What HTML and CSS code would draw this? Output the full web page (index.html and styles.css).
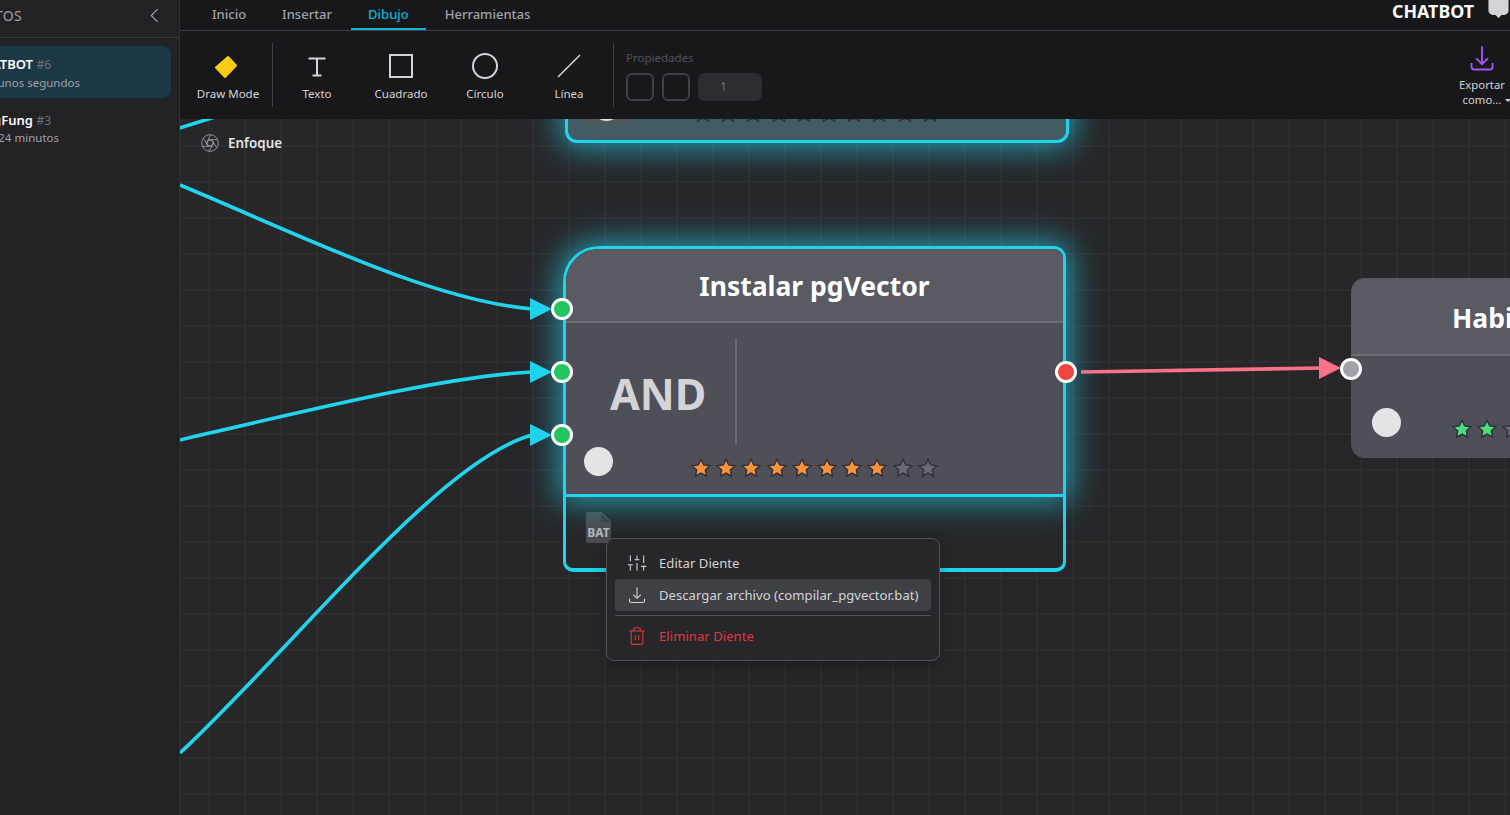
FILE: index.html

```html
<!DOCTYPE html>
<html lang="es">
<head>
  <meta charset="UTF-8" />
  <meta name="viewport" content="width=device-width, initial-scale=1.0"/>
  <title>Chatbot</title>
  <link rel="stylesheet" href="styles.css">
</head>
<body>

  <svg class="defs" width="0" height="0">
    <symbol id="star" viewBox="0 0 24 24">
      <path d="M12 2.500l2.900 6.200 6.800.8-5 4.600 1.300 6.700-6-3.300-6 3.300 1.300-6.700-5-4.600 6.800-.8z"/>
    </symbol>
  </svg>

  <aside class="sidebar">
    <div class="side-head">
      <span class="side-title">PROYECTOS</span>
      <svg class="chevron" viewBox="0 0 24 24"><path d="M15 3l-9 9 9 9"/></svg>
    </div>
    <div class="side-list">
      <div class="side-item active">
        <div class="item-name">CHATBOT <span class="item-num">#6</span></div>
        <div class="item-time">Hace unos segundos</div>
      </div>
      <div class="side-item second">
        <div class="item-name">KungFung <span class="item-num">#3</span></div>
        <div class="item-time">Hace 24 minutos</div>
      </div>
    </div>
  </aside>

  <main class="main">
    <nav class="tabs">
      <a class="tab">Inicio</a>
      <a class="tab">Insertar</a>
      <a class="tab current">Dibujo</a>
      <a class="tab">Herramientas</a>
      <div class="brand">
        <span>CHATBOT</span>
        <svg class="bubble" viewBox="0 0 23 24"><path d="M5 -4h13a5 5 0 0 1 5 5v11a5 5 0 0 1-5 5h-3l-3.500 3.500-3.500-3.500H5a5 5 0 0 1-5-5V1a5 5 0 0 1 5-5z"/></svg>
      </div>
    </nav>

    <section class="ribbon">
      <div class="tool tool-mode">
        <svg class="tool-icon" width="24" height="24" viewBox="0 0 24 24"><path class="mode-shape" d="M15 2l8 8.500-11 11.500-9-9.500z"/></svg>
        <span>Draw Mode</span>
      </div>
      <div class="sep"></div>
      <div class="tool">
        <svg class="tool-icon" width="24" height="24" viewBox="0 0 24 24"><path d="M3.500 3.500h17M12 3.500v17M7.500 20.500h9"/></svg>
        <span>Texto</span>
      </div>
      <div class="tool">
        <svg class="tool-icon" width="26" height="26" viewBox="0 0 26 26"><rect x="2" y="2" width="22" height="22"/></svg>
        <span>Cuadrado</span>
      </div>
      <div class="tool">
        <svg class="tool-icon" width="26" height="26" viewBox="0 0 26 26"><circle cx="13" cy="13" r="12"/></svg>
        <span>Círculo</span>
      </div>
      <div class="tool">
        <svg class="tool-icon thin" width="26" height="26" viewBox="0 0 26 26"><path d="M2 24L24 2"/></svg>
        <span>Línea</span>
      </div>
      <div class="sep sep-props"></div>
      <div class="props">
        <div class="props-label">Propiedades</div>
        <div class="props-row">
          <div class="swatch"></div>
          <div class="swatch"></div>
          <div class="stroke-input">1</div>
        </div>
      </div>
      <div class="export">
        <svg width="28" height="28" viewBox="0 0 24 24"><path d="M3 15.500v3.250A2.250 2.250 0 0 0 5.250 21h13.500A2.250 2.250 0 0 0 21 18.750V15.500M17 11.500L12 16.500l-5-5M12 16.500V1"/></svg>
        <span>Exportar<br>como...</span>
        <i class="caret"></i>
      </div>
    </section>

    <section class="canvas">
      <svg class="wires" viewBox="180 119 1330 696">
        <path class="wire cyan" d="M170 131L215 117"/>
        <path class="wire cyan" d="M180 185C300 235 430 300 532 309"/>
        <path class="wire cyan" d="M180 440C330 405 450 376 532 372"/>
        <path class="wire cyan" d="M180 753C300 640 440 460 532 435"/>
        <path class="head cyan" d="M530 298L552 309L530 320z"/>
        <path class="head cyan" d="M530 361L552 372L530 383z"/>
        <path class="head cyan" d="M530 424L552 435L530 446z"/>
        <path class="wire pink" d="M1081 372L1322 368"/>
        <path class="head pink" d="M1319 357L1341 368L1319 379z"/>
      </svg>

      <div class="focus">
        <svg viewBox="0 0 24 24"><circle cx="12" cy="12" r="10"/><circle cx="12" cy="12" r="3.500"/><path d="M14.310 8l5.740 9.940M9.690 8h11.480M7.380 12l5.740-9.940M9.690 16L3.950 6.060M14.310 16H2.830M16.620 12l-5.740 9.940"/></svg>
        <span>Enfoque</span>
      </div>

      <div class="node node-top">
        <div class="node-foot">
          <i class="dot"></i>
          <div class="stars">
            <svg class="star green"><use href="#star"/></svg>
            <svg class="star green"><use href="#star"/></svg>
            <svg class="star off"><use href="#star"/></svg>
            <svg class="star off"><use href="#star"/></svg>
            <svg class="star off"><use href="#star"/></svg>
            <svg class="star off"><use href="#star"/></svg>
            <svg class="star off"><use href="#star"/></svg>
            <svg class="star off"><use href="#star"/></svg>
            <svg class="star off"><use href="#star"/></svg>
            <svg class="star off"><use href="#star"/></svg>
          </div>
        </div>
      </div>

      <div class="node node-main">
        <div class="node-card">
          <h2 class="node-title">Instalar pgVector</h2>
          <div class="node-body">
            <div class="gate">AND</div>
            <div class="gate-line"></div>
            <div class="node-foot">
              <i class="dot"></i>
              <div class="stars">
                <svg class="star orange"><use href="#star"/></svg>
                <svg class="star orange"><use href="#star"/></svg>
                <svg class="star orange"><use href="#star"/></svg>
                <svg class="star orange"><use href="#star"/></svg>
                <svg class="star orange"><use href="#star"/></svg>
                <svg class="star orange"><use href="#star"/></svg>
                <svg class="star orange"><use href="#star"/></svg>
                <svg class="star orange"><use href="#star"/></svg>
                <svg class="star off"><use href="#star"/></svg>
                <svg class="star off"><use href="#star"/></svg>
              </div>
            </div>
          </div>
        </div>
        <div class="node-teeth">
          <div class="file-badge">BAT</div>
        </div>
      </div>

      <div class="node node-next">
        <h2 class="node-title">Habilitar pgVector</h2>
        <div class="node-body">
          <div class="node-foot">
            <i class="dot"></i>
            <div class="stars">
              <svg class="star mint"><use href="#star"/></svg>
              <svg class="star mint"><use href="#star"/></svg>
              <svg class="star off"><use href="#star"/></svg>
            </div>
          </div>
        </div>
      </div>

      <i class="port in p1"></i>
      <i class="port in p2"></i>
      <i class="port in p3"></i>
      <i class="port out"></i>
      <i class="port idle"></i>

      <div class="menu">
        <div class="menu-item">
          <svg viewBox="0 0 24 24"><path d="M4 21v-7M4 10V3M12 21v-9M12 8V3M20 21v-5M20 12V3M1 14h6M9 8h6M17 16h6"/></svg>
          <span>Editar Diente</span>
        </div>
        <div class="menu-item hover">
          <svg viewBox="0 0 24 24"><path d="M3 16.500v2.250A2.250 2.250 0 0 0 5.250 21h13.500A2.250 2.250 0 0 0 21 18.750V16.500M16.500 11.500L12 16l-4.500-4.500M12 16V3"/></svg>
          <span>Descargar archivo (compilar_pgvector.bat)</span>
        </div>
        <div class="menu-sep"></div>
        <div class="menu-item danger">
          <svg viewBox="0 0 24 24"><path d="M3 6h18M19 6v14c0 1-1 2-2 2H7c-1 0-2-1-2-2V6M8 6V4c0-1 1-2 2-2h4c1 0 2 1 2 2v2M10 11v6M14 11v6"/></svg>
          <span>Eliminar Diente</span>
        </div>
      </div>
    </section>
  </main>

</body>
</html>
```

FILE: styles.css

```css
* {
  box-sizing: border-box;
}
html, body {
  height: 100%;
}
body {
  margin: 0;
  display: flex;
  overflow: hidden;
  font-family: "Noto Sans", "Open Sans", sans-serif;
  color: #e4e4e7;
  background: #27272a;
}
.defs {
  position: absolute;
}

/* barra lateral */
.sidebar {
  width: 180px;
  flex: none;
  overflow: hidden;
  background: #222225;
  border-right: 1px solid #303033;
}
.side-head {
  height: 38px;
  display: flex;
  align-items: center;
  justify-content: flex-end;
  padding: 0 15px 6px 0;
  border-bottom: 1px solid #3a3a3d;
  position: relative;
}
.side-title {
  position: absolute;
  right: 157px;
  top: 6px;
  font-size: 14px;
  color: #a1a1aa;
  letter-spacing: 0.3px;
  white-space: nowrap;
}
.chevron {
  width: 17px;
  height: 17px;
  fill: none;
  stroke: #a1a1aa;
  stroke-width: 1.600;
}
.side-list {
  padding: 8px 8px 0 0;
}
.side-item {
  height: 52px;
  white-space: nowrap;
  width: 171px;
  position: relative;
}
.side-item.active {
  background: #1c3845;
  border-radius: 0 8px 8px 0;
}
.side-item.second {
  margin-top: 12px;
}
.item-name {
  position: absolute;
  right: 120px;
  top: 9px;
  font-size: 13px;
  font-weight: 600;
  color: #fafafa;
}
.item-num {
  font-weight: 400;
  font-size: 12px;
  color: #71717a;
}
.side-item.second .item-name {
  right: 120px;
  top: 1px;
}
.item-time {
  position: absolute;
  right: 91px;
  top: 29px;
  font-size: 11.500px;
  color: #a1a1aa;
}
.side-item.second .item-time {
  right: 112px;
  top: 20px;
}

/* pestañas */
.main {
  flex: 1;
  min-width: 0;
  display: flex;
  flex-direction: column;
}
.tabs {
  height: 31px;
  flex: none;
  display: flex;
  gap: 2px;
  padding-left: 15px;
  background: #18181b;
  border-bottom: 1px solid #3f3f46;
}
.tab {
  height: 30px;
  padding: 5px 17px 0;
  font-size: 13px;
  font-weight: 500;
  color: #a1a1aa;
}
.tab.current {
  color: #06b6d4;
  border-bottom: 2px solid #06b6d4;
}
.brand {
  margin-left: auto;
  display: flex;
  gap: 13px;
  font-size: 17.800px;
  font-weight: 700;
  color: #fafafa;
}
.brand span {
  line-height: 22px;
}
.bubble {
  width: 23px;
  height: 21px;
  fill: #d4d4d8;
}

/* cinta */
.ribbon {
  height: 88px;
  flex: none;
  display: flex;
  align-items: center;
  padding-left: 12px;
  background: #18181b;
  position: relative;
  z-index: 3;
}
.tool {
  width: 84px;
  height: 64px;
  display: flex;
  flex-direction: column;
  align-items: center;
  justify-content: flex-end;
  font-size: 11.500px;
  color: #d4d4d8;
}
.tool span {
  margin-top: 3px;
  line-height: 16px;
  padding-bottom: 5px;
}
.tool-icon {
  fill: none;
  stroke: #d4d4d8;
  stroke-width: 2;
  margin-bottom: 4px;
}
.tool-icon.thin {
  stroke-width: 1.600;
}
.tool-mode {
  width: 72px;
}
.tool-mode .tool-icon {
  margin-right: 6px;
}
.mode-shape {
  fill: #facc15;
  stroke: #facc15;
  stroke-linejoin: round;
}
.sep {
  width: 1px;
  height: 64px;
  background: #3f3f46;
}
.tool-mode + .sep {
  margin-left: 8px;
  margin-right: 2px;
}
.sep-props {
  margin-left: 2px;
}
.props {
  margin-left: 12px;
}
.props-label {
  font-size: 11.500px;
  color: #52525b;
  margin-bottom: 8px;
}
.props-row {
  display: flex;
  gap: 8px;
}
.swatch {
  width: 28px;
  height: 28px;
  border: 2px solid #3f3f46;
  border-radius: 6px;
}
.stroke-input {
  width: 64px;
  height: 28px;
  padding-left: 22px;
  line-height: 28px;
  font-size: 12px;
  color: #71717a;
  background: #2c2c31;
  border-radius: 6px;
}
.export {
  margin-left: auto;
  width: 56px;
  padding-top: 2px;
  display: flex;
  flex-direction: column;
  align-items: center;
  font-size: 11.300px;
  line-height: 15px;
  text-align: center;
  color: #d4d4d8;
  position: relative;
}
.export svg {
  fill: none;
  stroke: #a855f7;
  stroke-width: 1.600;
  margin-bottom: 4px;
}
.caret {
  position: absolute;
  right: -1px;
  bottom: 5px;
  border: 3px solid transparent;
  border-top-color: #d4d4d8;
  border-bottom: 0;
}

/* lienzo */
.canvas {
  flex: 1;
  position: relative;
  overflow: hidden;
  background-color: #27272a;
  background-image:
    linear-gradient(to right, #2d2d30 2px, transparent 2px),
    linear-gradient(to bottom, #2d2d30 2px, transparent 2px);
  background-size: 36px 36px;
  background-position: 28px 26px;
}
.wires {
  position: absolute;
  inset: 0;
  width: 1330px;
  height: 696px;
}
.wire {
  fill: none;
  stroke-width: 3.600;
}
.wire.cyan {
  stroke: #22d3ee;
}
.wire.pink {
  stroke: #fb7185;
}
.head.cyan {
  fill: #22d3ee;
}
.head.pink {
  fill: #fb7185;
}
.focus {
  position: absolute;
  left: 20px;
  top: 14px;
  display: flex;
  align-items: center;
  gap: 8px;
  font-size: 13.400px;
  font-weight: 600;
}
.focus svg {
  width: 20px;
  height: 20px;
  fill: none;
  stroke: #a1a1aa;
  stroke-width: 1;
}

/* nodos */
.node {
  position: absolute;
}
.node-title {
  margin: 0;
  height: 74px;
  line-height: 74px;
  padding-bottom: 2px;
  text-align: center;
  font-size: 26.500px;
  font-weight: 700;
  color: #fff;
  white-space: nowrap;
  background: #5a5a62;
  border-bottom: 2px solid #6e6e73;
}
.node-body {
  position: relative;
  background: #4f4f58;
}
.node-foot {
  display: flex;
  align-items: center;
}
.dot {
  width: 29px;
  height: 29px;
  flex: none;
  border-radius: 50%;
  background: #e4e4e7;
}
.stars {
  display: flex;
  gap: 3.200px;
  margin-top: 13px;
}
.star {
  width: 22px;
  height: 22px;
  stroke: #2f2f33;
  stroke-width: 1.500;
}
.star.orange {
  fill: #fb923c;
}
.star.green {
  fill: #22c55e;
}
.star.mint {
  fill: #4ade80;
}
.star.off {
  fill: #6b6b73;
}

.node-top {
  left: 385px;
  top: -179px;
  width: 504px;
  height: 203px;
  padding: 0 19px 0 24px;
  border: 3px solid #22d3ee;
  border-radius: 12px;
  background: #425c65;
  box-shadow: 0 0 32px 4px rgba(34, 211, 238, 0.7);
}
.node-top .node-foot {
  position: relative;
  margin-top: 146px;
  gap: 71px;
}
.node-top .node-foot::before {
  content: "";
  position: absolute;
  left: -9px;
  top: -10px;
  width: 47px;
  height: 46px;
  border-radius: 8px;
  background: #55555c;
}
.node-top .dot,
.node-top .stars {
  position: relative;
}

.node-main {
  left: 383px;
  top: 127px;
  width: 503px;
  display: flex;
  flex-direction: column;
}
.node-card {
  position: relative;
  z-index: 1;
  border: 3px solid #22d3ee;
  border-radius: 36px 12px 0 0;
  box-shadow: 0 0 32px 4px rgba(34, 211, 238, 0.7);
}
.node-card .node-title {
  border-radius: 33px 9px 0 0;
}
.node-card .node-body {
  height: 171px;
  padding: 15px 0 0 44px;
  display: flex;
}
.gate {
  width: 125px;
  height: 106px;
  line-height: 112px;
  font-size: 43px;
  font-weight: 700;
  color: #d4d4d8;
}
.gate-line {
  width: 2px;
  height: 106px;
  background: #6b6b72;
}
.node-card .node-foot {
  position: absolute;
  left: 18px;
  top: 121px;
  gap: 77px;
}
.node-teeth {
  height: 75px;
  padding: 15px 0 0 20px;
  border: 3px solid #22d3ee;
  border-top: 0;
  border-bottom-width: 4px;
  border-radius: 0 0 10px 10px;
  background: #27272a;
}
.file-badge {
  position: relative;
  width: 25px;
  height: 31px;
  padding-top: 13px;
  text-align: center;
  font-size: 12px;
  line-height: 16px;
  font-weight: 700;
  color: #b8b8bc;
  background: #4b4b50;
  border-radius: 2px;
  clip-path: polygon(0 0, 60% 0, 100% 32%, 100% 100%, 0 100%);
}
.file-badge::after {
  content: "";
  position: absolute;
  right: 0;
  top: 0;
  width: 10px;
  height: 10px;
  background: linear-gradient(to top right, #3a3a3f 46%, #77777c 46%, #77777c 54%, transparent 54%);
}

.node-next {
  left: 1171px;
  top: 159px;
  width: 330px;
  border-radius: 14px;
  overflow: hidden;
}
.node-next .node-title {
  height: 78px;
  line-height: 80px;
  padding-bottom: 0;
  text-align: left;
  padding-left: 101px;
}
.node-next .node-body {
  height: 102px;
}
.node-next .node-foot {
  padding: 49px 0 0 21px;
  gap: 50px;
}

/* puertos */
.port {
  position: absolute;
  width: 22px;
  height: 22px;
  border: 3px solid #fff;
  border-radius: 50%;
  z-index: 2;
}
.port.in {
  left: 371px;
  background: #22c55e;
}
.p1 {
  top: 179px;
}
.p2 {
  top: 242px;
}
.p3 {
  top: 305px;
}
.port.out {
  left: 875px;
  top: 242px;
  background: #ef4444;
}
.port.idle {
  left: 1160px;
  top: 239px;
  background: #a1a1aa;
}

/* menu contextual */
.menu {
  position: absolute;
  left: 426px;
  top: 419px;
  width: 334px;
  height: 123px;
  padding: 8px;
  z-index: 3;
  background: #27272a;
  border: 1px solid #52525b;
  border-radius: 8px;
  box-shadow: 0 6px 16px rgba(0, 0, 0, 0.25);
}
.menu-item {
  height: 32px;
  display: flex;
  align-items: center;
  gap: 12px;
  padding-left: 12px;
  font-size: 13.100px;
  letter-spacing: 0.03px;
  color: #d4d4d8;
  border-radius: 4px;
  white-space: nowrap;
}
.menu-item svg {
  width: 20px;
  height: 20px;
  flex: none;
  fill: none;
  stroke: #d4d4d8;
  stroke-width: 1.300;
}
.menu-item.hover {
  background: #3f3f46;
}
.menu-sep {
  height: 1px;
  margin: 4px 0;
  background: #52525b;
}
.menu-item.danger,
.menu-item.danger svg {
  color: #dc3a3f;
  stroke: #dc3a3f;
}
```
